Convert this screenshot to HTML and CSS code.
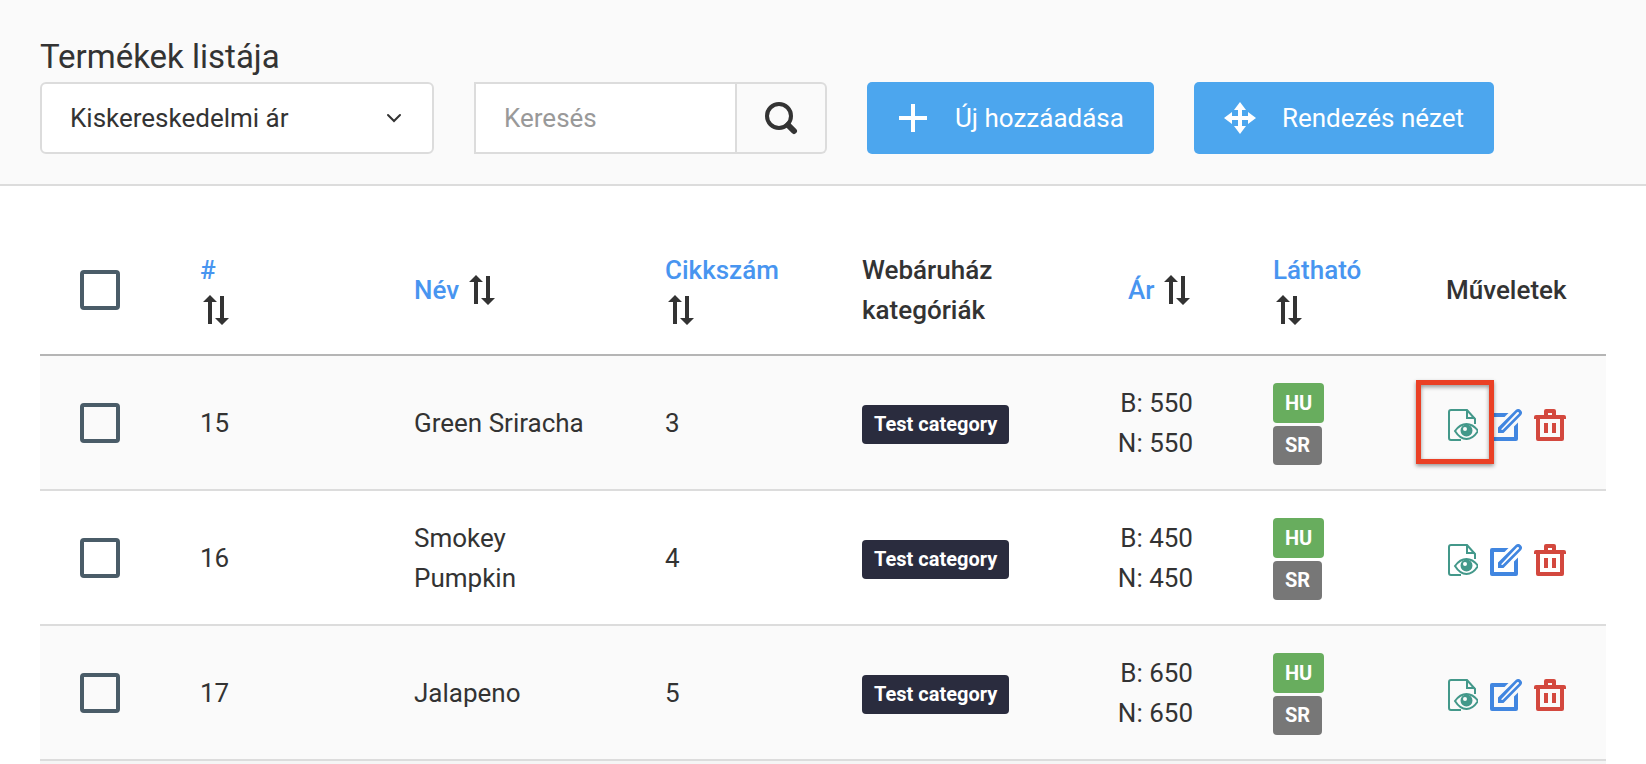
FILE: index.html
```html
<!DOCTYPE html>
<html lang="hu">
	<head>
		<meta charset="utf-8">
		<title>Termékek listája</title>
		<link rel="stylesheet" href="styles.css">
	</head>
	<body>
		<svg class="sprite" aria-hidden="true">
			<symbol id="sort" viewBox="0 0 32 30">
				<path fill="currentColor" d="M10 0L17 7H12V29H8V7H3zM20 1h4v22h5l-7 7-7-7h5z"/>
			</symbol>
			<symbol id="view" viewBox="0 0 32 32">
				<g fill="none" stroke="currentColor" stroke-width="2">
					<path d="M15 31H5q-2 0-2-2V3q0-2 2-2h16l8 9v5M21 1v8h8"/>
					<path d="M9 22q5-7 11.500-7T32 22q-5 8-11.500 8T9 22z"/>
				</g>
				<path fill="currentColor" fill-rule="evenodd" d="M20.500 15.500a6 6 0 1 1 0 12 6 6 0 0 1 0-12zM19 18a2 2 0 1 0 0 4 2 2 0 0 0 0-4z"/>
			</symbol>
			<symbol id="edit" viewBox="0 0 32 32">
				<path fill="currentColor" d="M18.500 4l-4 4H4v20h20V17.500l4-4V30q0 2-2 2H2q-2 0-2-2V6q0-2 2-2z"/>
				<path fill="currentColor" fill-rule="evenodd" d="M8 24v-5.500L26 .8q2.500-1.800 4.800.4t.4 4.800L13.500 24zM11 20.500l1.500.5L28.800 4.700q.5-1-.2-1.500t-1.500 0z"/>
			</symbol>
			<symbol id="trash" viewBox="0 0 32 32">
				<path fill="currentColor" fill-rule="evenodd" d="M10 6V2q0-2 2-2h8q2 0 2 2v4h8q2 0 2 2v2h-2v20q0 2-2 2H4q-2 0-2-2V10H0V8q0-2 2-2zM14 4v2h4V4zM6 10v18h20V10zM10 14h4v10h-4zM18 14h4v10h-4z"/>
			</symbol>
		</svg>

		<header class="toolbar">
			<h1>Termékek listája</h1>
			<div class="controls">
				<select class="price-type" aria-label="Ár típusa">
					<option>Kiskereskedelmi ár</option>
				</select>
				<form class="search">
					<input type="text" placeholder="Keresés" aria-label="Keresés">
					<button type="button" aria-label="Keresés indítása">
						<svg width="34" height="34" viewBox="0 0 34 34"><g fill="none" stroke="currentColor"><circle cx="15" cy="15" r="12" stroke-width="4"/><path d="M24 24l6 6" stroke-width="6" stroke-linecap="round"/></g></svg>
					</button>
				</form>
				<button type="button" class="btn">
					<svg width="32" height="32" viewBox="0 0 32 32"><path fill="currentColor" d="M14 2h4v12h12v4H18v12h-4V18H2v-4h12z"/></svg>
					Új hozzáadása
				</button>
				<button type="button" class="btn">
					<svg width="32" height="32" viewBox="0 0 32 32"><path fill="currentColor" d="M16 0l6 8h-4v6h6v-4l8 6-8 6v-4h-6v6h4l-6 8-6-8h4v-6H8v4l-8-6 8-6v4h6V8h-4z"/></svg>
					Rendezés nézet
				</button>
			</div>
		</header>

		<main>
			<table>
				<colgroup>
					<col class="col-check"><col class="col-id"><col class="col-name"><col class="col-sku">
					<col class="col-cat"><col class="col-price"><col class="col-visible"><col class="col-actions">
				</colgroup>
				<thead>
					<tr>
						<th><input type="checkbox" aria-label="Összes kijelölése"></th>
						<th><a href="#">#</a><br><svg class="sort"><use href="#sort"/></svg></th>
						<th><a href="#">Név</a> <svg class="sort"><use href="#sort"/></svg></th>
						<th><a href="#">Cikkszám</a><br><svg class="sort"><use href="#sort"/></svg></th>
						<th>Webáruház kategóriák</th>
						<th class="price"><a href="#">Ár</a> <svg class="sort"><use href="#sort"/></svg></th>
						<th><a href="#">Látható</a><br><svg class="sort"><use href="#sort"/></svg></th>
						<th>Műveletek</th>
					</tr>
				</thead>
				<tbody>
					<tr>
						<td><input type="checkbox" aria-label="Green Sriracha"></td>
						<td>15</td>
						<td>Green Sriracha</td>
						<td>3</td>
						<td><span class="badge category">Test category</span></td>
						<td class="price">B: 550<br>N: 550</td>
						<td><div class="langs"><span class="badge on">HU</span><span class="badge off">SR</span></div></td>
						<td>
							<div class="actions">
								<a href="#" class="view marked" aria-label="Megtekintés"><svg><use href="#view"/></svg></a>
								<a href="#" class="edit" aria-label="Szerkesztés"><svg><use href="#edit"/></svg></a>
								<a href="#" class="delete" aria-label="Törlés"><svg><use href="#trash"/></svg></a>
							</div>
						</td>
					</tr>
					<tr>
						<td><input type="checkbox" aria-label="Smokey Pumpkin"></td>
						<td>16</td>
						<td>Smokey Pumpkin</td>
						<td>4</td>
						<td><span class="badge category">Test category</span></td>
						<td class="price">B: 450<br>N: 450</td>
						<td><div class="langs"><span class="badge on">HU</span><span class="badge off">SR</span></div></td>
						<td>
							<div class="actions">
								<a href="#" class="view" aria-label="Megtekintés"><svg><use href="#view"/></svg></a>
								<a href="#" class="edit" aria-label="Szerkesztés"><svg><use href="#edit"/></svg></a>
								<a href="#" class="delete" aria-label="Törlés"><svg><use href="#trash"/></svg></a>
							</div>
						</td>
					</tr>
					<tr>
						<td><input type="checkbox" aria-label="Jalapeno"></td>
						<td>17</td>
						<td>Jalapeno</td>
						<td>5</td>
						<td><span class="badge category">Test category</span></td>
						<td class="price">B: 650<br>N: 650</td>
						<td><div class="langs"><span class="badge on">HU</span><span class="badge off">SR</span></div></td>
						<td>
							<div class="actions">
								<a href="#" class="view" aria-label="Megtekintés"><svg><use href="#view"/></svg></a>
								<a href="#" class="edit" aria-label="Szerkesztés"><svg><use href="#edit"/></svg></a>
								<a href="#" class="delete" aria-label="Törlés"><svg><use href="#trash"/></svg></a>
							</div>
						</td>
					</tr>
				</tbody>
				<tfoot>
					<tr><td colspan="8"></td></tr>
				</tfoot>
			</table>
		</main>
	</body>
</html>
```
FILE: styles.css
```css
*,
*::after {
	box-sizing: border-box;
}
body {
	margin: 0;
	background: #fff;
	color: #333;
	font-family: Roboto, Arial, sans-serif;
	font-size: 26px;
	line-height: 40px;
}
svg {
	display: block;
}
.sprite {
	display: none;
}
a {
	color: #4895f0;
	text-decoration: none;
}

/* top bar */
.toolbar {
	padding: 32px 40px 30px;
	background: #fafafa;
	border-bottom: 2px solid #dcdcdc;
}
h1 {
	margin: 0;
	font-size: 33px;
	font-weight: 400;
	line-height: 50px;
}
.controls {
	display: flex;
	gap: 40px;
}
.controls input,
.controls select,
.controls button {
	height: 72px;
	color: #333;
	font: inherit;
}
.price-type {
	width: 394px;
	padding: 0 28px;
	border: 2px solid #dcdcdc;
	border-radius: 6px;
	appearance: none;
	background: #fff url("data:image/svg+xml,%3Csvg xmlns='http://www.w3.org/2000/svg' width='16' height='10'%3E%3Cpath d='M2 2l6 6 6-6' fill='none' stroke='%23333' stroke-width='2' stroke-linecap='round'/%3E%3C/svg%3E") no-repeat right 30px center;
}
.search {
	display: flex;
	width: 353px;
}
.search input {
	flex: 1;
	min-width: 0;
	padding: 0 28px;
	background: #fff;
	border: 2px solid #dcdcdc;
	border-radius: 0;
}
.search input::placeholder {
	color: #999;
}
.search button {
	width: 90px;
	padding: 0 27px;
	background: #fafafa;
	border: 2px solid #dcdcdc;
	border-left: 0;
	border-radius: 0 6px 6px 0;
}
.controls .btn {
	display: flex;
	align-items: center;
	gap: 26px;
	padding: 0 30px;
	background: #4ca6ee;
	border: 0;
	border-radius: 5px;
	color: #fff;
}

/* product list */
main {
	padding: 40px 40px 0;
}
table {
	width: 100%;
	table-layout: fixed;
	border-collapse: separate;
	border-spacing: 0;
}
.col-check { width: 120px; }
.col-id { width: 214px; }
.col-name { width: 251px; }
.col-sku { width: 197px; }
.col-cat { width: 224px; }
.col-price { width: 187px; }
.col-visible { width: 173px; }
.col-actions { width: 200px; }
th {
	padding: 24px 40px;
	border-bottom: 2px solid #b5b5b5;
	font-weight: 500;
	text-align: left;
}
td {
	padding: 24px 40px;
	border-bottom: 2px solid #dcdcdc;
}
tbody tr:nth-child(odd) {
	background: #fafafa;
}
tfoot td {
	height: 3px;
	padding: 0;
	border: 0;
	background: #f5f5f5;
}
.price {
	text-align: right;
	white-space: nowrap;
}
th:last-child {
	white-space: nowrap;
}
input[type="checkbox"] {
	display: block;
	width: 40px;
	height: 40px;
	margin: 0;
	appearance: none;
	border: 4px solid #4a5c68;
	border-radius: 4px;
}
.sort {
	display: inline-block;
	width: 32px;
	height: 30px;
	margin: 5px 0;
	vertical-align: top;
}
.badge {
	display: inline-block;
	padding: 0 12px;
	border-radius: 4px;
	color: #fff;
	font-size: 20px;
	font-weight: 700;
	line-height: 39px;
}
.category {
	background: #2a2c3e;
	white-space: nowrap;
}
.langs {
	display: flex;
	flex-direction: column;
	align-items: flex-start;
	gap: 3px;
	padding-top: 3px;
}
.on {
	background: #68ad5e;
	line-height: 40px;
}
.off {
	background: #777;
}
.actions {
	display: flex;
	gap: 12px;
	padding-top: 5px;
}
.actions a {
	position: relative;
}
.actions svg {
	width: 32px;
	height: 32px;
}
.view { color: #43988a; }
.edit { color: #4186e0; }
.delete { color: #d3483e; }
.actions .marked {
	z-index: 1;
}
.marked::after {
	content: "";
	position: absolute;
	top: -29px;
	left: -30px;
	width: 78px;
	height: 84px;
	border: 5px solid #ea4025;
	box-shadow: 0 2px 4px rgba(0, 0, 0, 0.4), inset 0 2px 4px rgba(0, 0, 0, 0.4);
}
```
